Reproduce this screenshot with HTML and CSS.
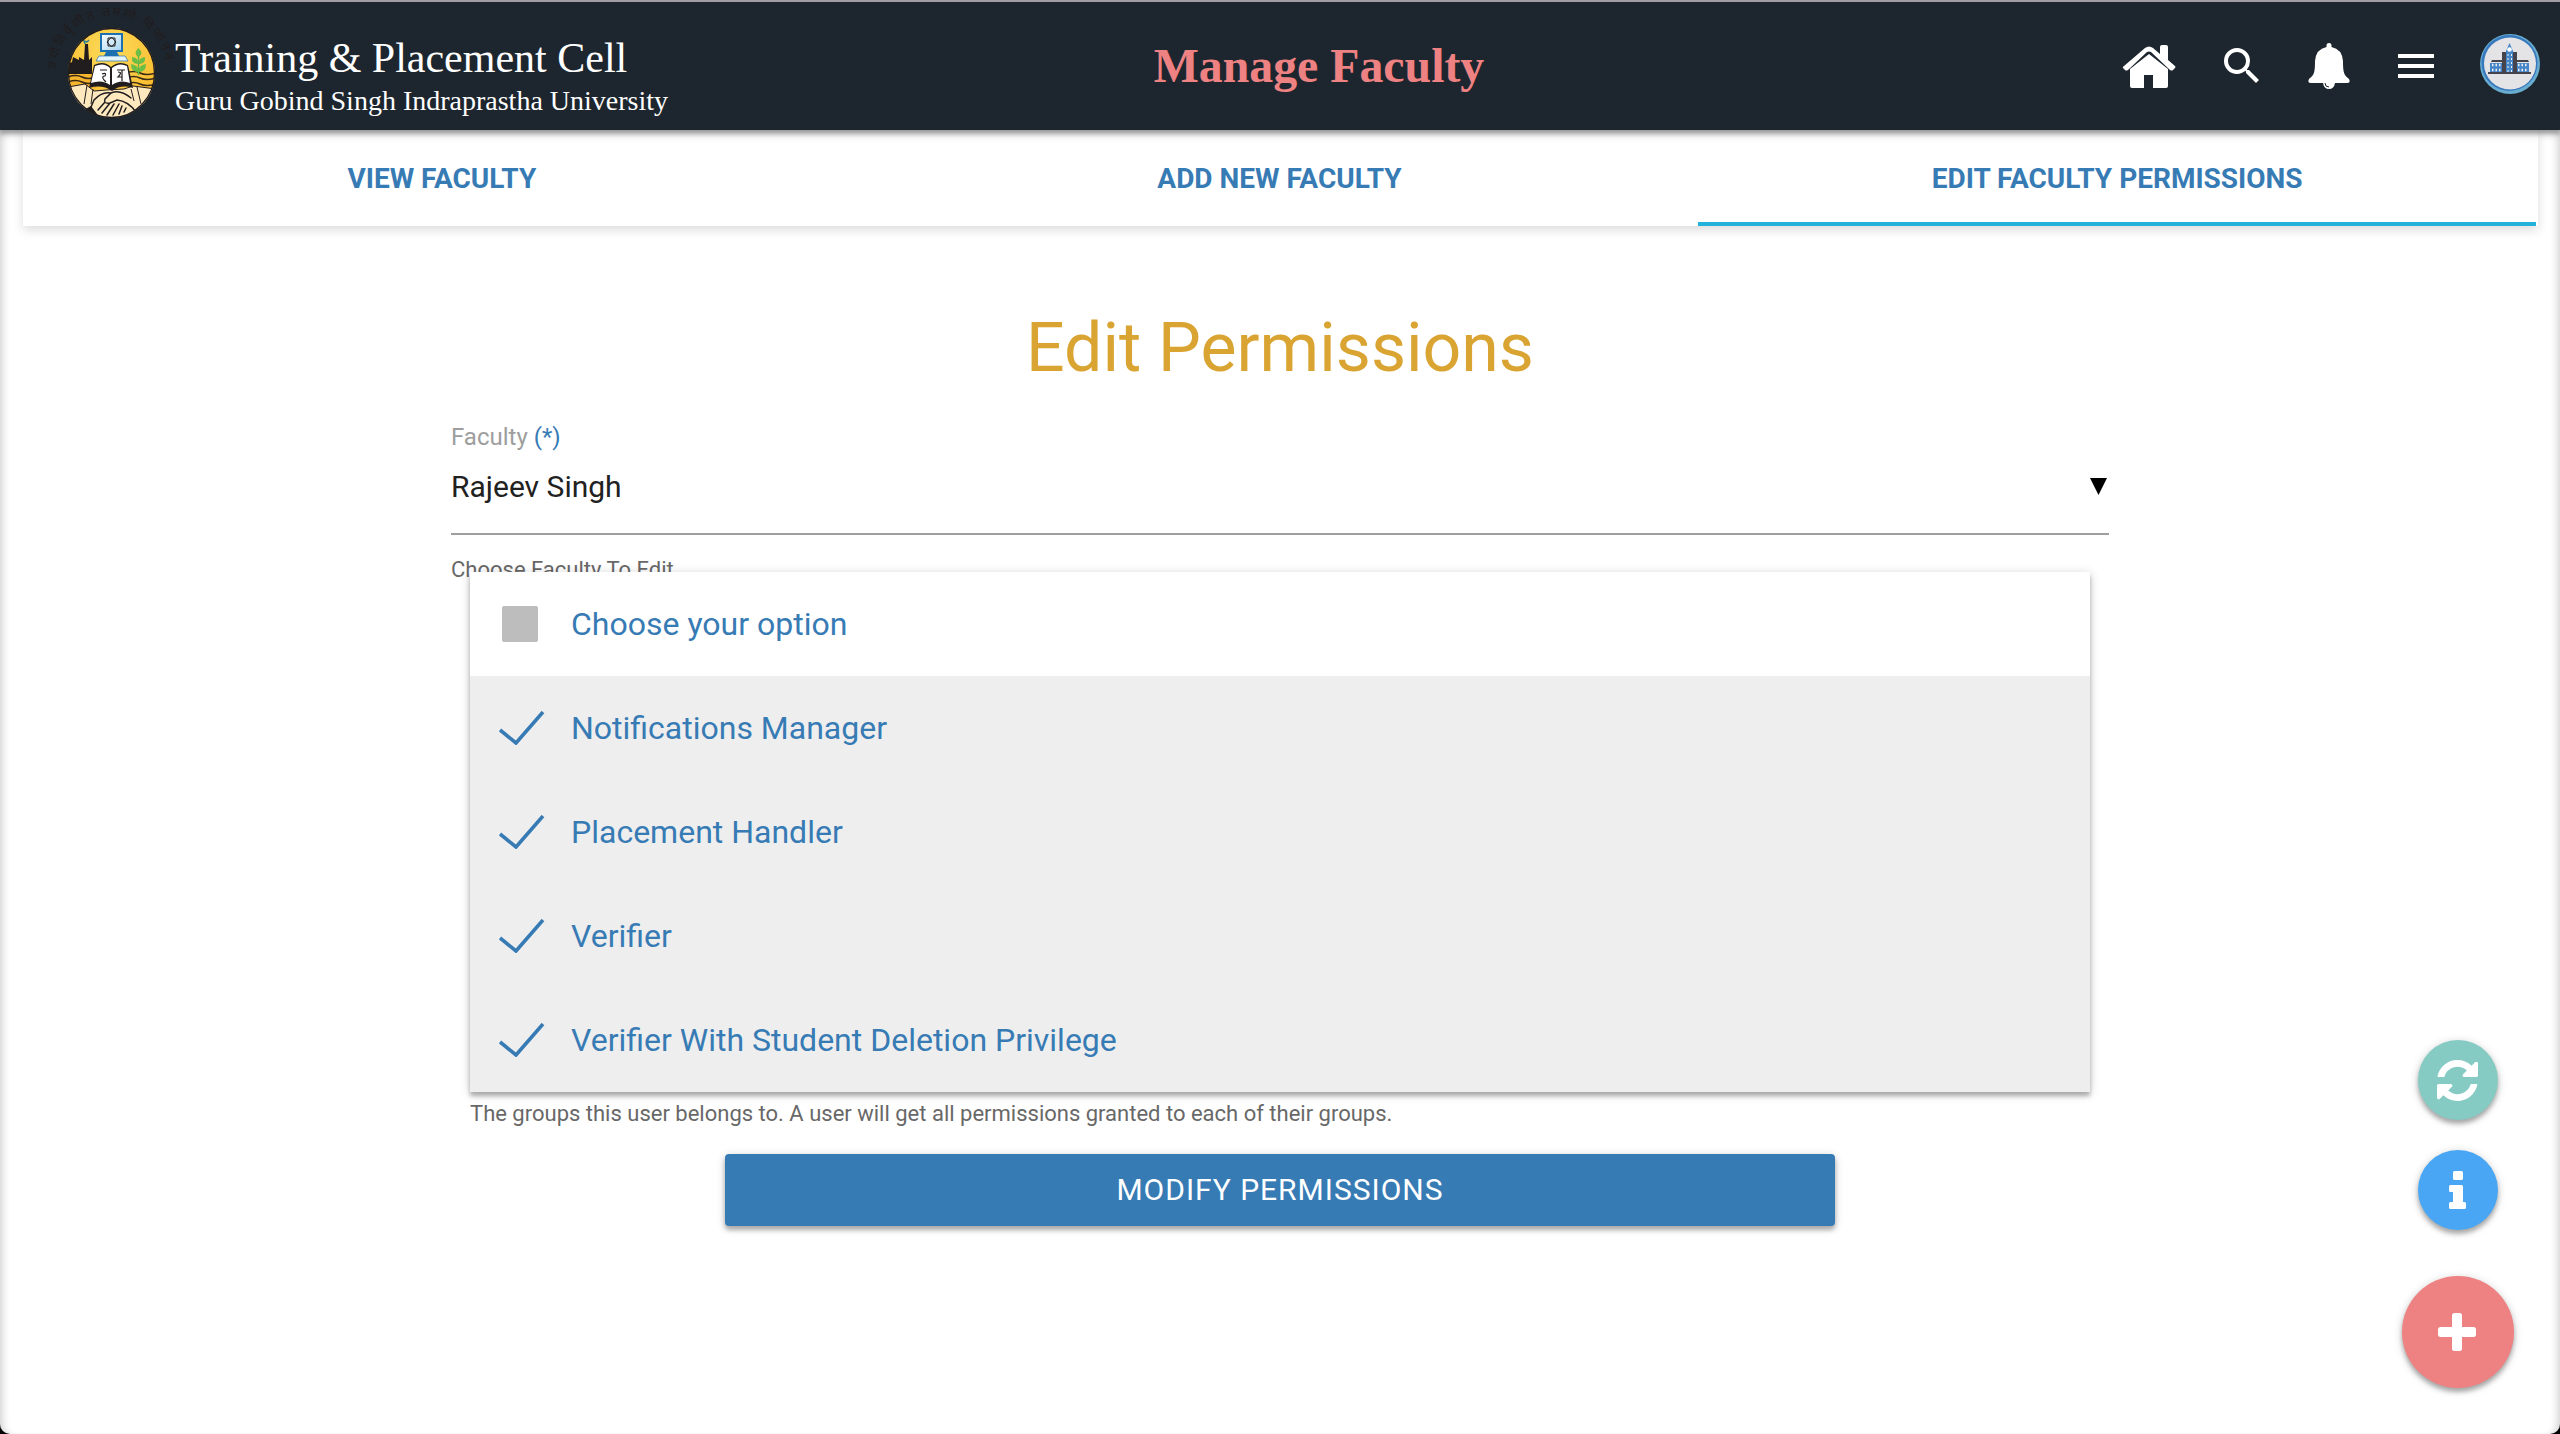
FILE: index.html
```html
<!DOCTYPE html>
<html lang="en">
<head>
<meta charset="utf-8">
<title>Manage Faculty</title>
<link rel="stylesheet" href="styles.css">
</head>
<body>
<header class="navbar">
  <div class="brand">
    <svg class="logo" viewBox="0 0 100 100" width="100" height="100">
      <defs>
        <clipPath id="seal"><ellipse cx="51.500" cy="53" rx="43.500" ry="45"/></clipPath>
        <radialGradient id="sun" cx=".5" cy=".3" r=".7"><stop offset="0" stop-color="#fbdc5c"/><stop offset="1" stop-color="#fbb321"/></radialGradient>
        <linearGradient id="screen" x2="1" y2="1"><stop offset="0" stop-color="#f4fafd"/><stop offset="1" stop-color="#a9d6f1"/></linearGradient>
        <path id="motto" d="M-3 49A54.500 53 0 0 1 106 49"/>
      </defs>
      <text class="motto"><textPath href="#motto" textLength="160">ज्योतिर्वृणीत तमसो विजानन</textPath></text>
      <g clip-path="url(#seal)">
        <rect width="100" height="100" fill="url(#sun)"/>
        <path d="M8 44l4-2 1-5 6 3v-3l5 3 1-16h3l1 16 3-3v28H8z" fill="#211c1e"/>
        <path d="M8 54h28v14H8z" fill="#f7b52c"/>
        <path d="M25 24l-1-3 3 1 2-2" stroke="#2d7e92" stroke-width="1.500" fill="none"/>
        <path d="M8 57q8-3 14 0t14 0M8 62q8-3 14 0t14 0M66 53q8-3 14 0t16 0M66 58q8-3 14 0t16 0M66 64q8-3 14 0t16 0" stroke="#3a2a18" stroke-width="1.500" fill="none"/>
        <path d="M78.500 55V30" stroke="#62b846" stroke-width="1.500"/>
        <path d="M78.500 37q-6-3 0-9 6 6 0 9zM78 44q-7 0-6-7 7 1 6 7zM79 44q7 0 6-7-7 1-6 7zM78 52q-7 0-7-8 8 1 7 8zM79 52q7 0 7-8-8 1-7 8z" fill="#6abd45"/>
        <path d="M8 67l17-3 9 7 12-1 18-1 9-3 23 3-4 31H8z" fill="#fee9bf" stroke="#211c1e"/>
        <path d="M34 45q10-5 17 2 8-7 17-2l5 23q-12-4-21 3-10-7-23-3z" fill="#211c1e"/>
        <path d="M35 46q9-4 15 2v17q-8-6-19-2zM52 48q7-6 15-2l3 17q-10-4-18 2z" fill="#fff"/>
        <path d="M40 50h7M42 54q5-2 3 2-4 0-1 4l2 2M57 50h8M62 50v11M58 52q5 0 0 5h4" stroke="#211c1e" stroke-width="1.200" fill="none"/>
        <path d="M27 65l-3 19M33 69l-2 15M77 67l4 17M71 69l3 12" stroke="#211c1e" stroke-width="1" fill="none"/>
        <path d="M34 80q8-9 17-7l-6 6q-2 5 5 4l7-3q11 1 19 12M51 73q9-4 20 5M38 90l7-8M42 93l8-10M47 95l7-11M53 95l6-11M59 94l3-8M64 92l2-4M34 80l-3 7" stroke="#211c1e" stroke-width="1.500" fill="none" stroke-linecap="round"/>
        <path d="M20 92l11-6 9 12z" fill="#211c1e"/>
      </g>
      <ellipse cx="51.500" cy="53" rx="43" ry="44.500" fill="none" stroke="#211c1e" stroke-width="1.300"/>
      <path d="M40 13h23v19H40z" fill="#1d70b0"/><path d="M42 15h19v15H42z" fill="url(#screen)"/>
      <path d="M46 32h11l2 4H44z" fill="#1d70b0"/><path d="M39 36h26l3 5H36z" fill="#e5f3fb" stroke="#1d70b0" stroke-width=".7"/>
      <path d="M48 18h7v8h-7zM47 22l4.500-5 4.500 5-4.500 5z" fill="none" stroke="#211c1e"/>
    </svg>
    <div class="brand-text">
      <div class="brand-title">Training &amp; Placement Cell</div>
      <div class="brand-sub">Guru Gobind Singh Indraprastha University</div>
    </div>
  </div>
  <h1 class="page-title">Manage Faculty</h1>
  <nav class="nav-icons">
    <svg class="home" viewBox="0 0 54 44" width="54" height="44" fill="#fff"><path d="M2 21L23 3q4-3 8 0l7 6V2q0-2 2-2h4q2 0 2 2v13l7 6q1 1 0 2l-2 2q-1 1-3 0L29 7q-2-1-4 0L6 25q-2 1-3 0l-2-2q-1-1 1-2z"/><path d="M8 24L27 9l19 15v17q0 2-2 2H31V30h-9v13H10q-2 0-2-2z"/></svg>
    <svg class="search" viewBox="3 3 17.500 17.500" width="35" height="35" fill="#fff"><path d="M15.500 14h-.79l-.28-.27A6.471 6.471 0 0 0 16 9.500 6.500 6.500 0 1 0 9.500 16c1.610 0 3.090-.59 4.230-1.570l.27.28v.79l5 4.990L20.490 19l-4.990-5zm-6 0C7.010 14 5 11.990 5 9.500S7.010 5 9.500 5 14 7.010 14 9.500 11.990 14 9.500 14z"/></svg>
    <svg class="bell" viewBox="0 0 44 47" width="44" height="47"><path fill="#fff" d="M22 0q3 0 2.500 4Q35 6 36 18c0 12 1 14 6 18q2 4-2 4H28q-1 6-6 6t-6-6H4q-4 0-2-4c5-4 6-6 6-18Q9 6 19.500 4 19 0 22 0z"/><path d="M18 40q0 4 4 4" fill="none" stroke="#1d262e" stroke-width="1"/></svg>
    <svg class="menu" viewBox="0 0 36 24" width="36" height="24" fill="#fff"><path d="M0 0h36v4H0zM0 10h36v4H0zM0 20h36v4H0z"/></svg>
    <svg class="avatar" viewBox="0 0 60 60" width="60" height="60"><circle cx="30" cy="30" r="30" fill="#68add0"/><circle cx="29.500" cy="29" r="28" fill="#3778bd"/><circle cx="30" cy="29.500" r="26" fill="#e4e4e6"/>
      <path d="M22 18h4v20h-4zM33 18h4v20h-4zM12 26h10v2H11zM37 26h11l1 2H37zM8 38h43v2H8z" fill="#45434b"/>
      <path d="M26 38V17l3.500-8 3.500 8v21zM10 29h12v9H10zM37 29h12v9H37z" fill="#4585c8"/>
      <circle cx="29.500" cy="15.500" r="2.300" fill="#fff"/><path d="M28 20v18M31.500 20v18" stroke="#eee" stroke-width="1" stroke-dasharray="2 2"/><path d="M12 31h9M38 31h10M12 36h9M38 36h10" stroke="#eee" stroke-width="2.500" stroke-dasharray="1.500 2"/></svg>
  </nav>
</header>
<nav class="tabs">
  <a class="tab">VIEW FACULTY</a>
  <a class="tab">ADD NEW FACULTY</a>
  <a class="tab active">EDIT FACULTY PERMISSIONS</a>
</nav>
<main class="content">
  <h2 class="heading">Edit Permissions</h2>
  <form class="form">
    <label class="label">Faculty <span class="required">(*)</span></label>
    <div class="select"><span>Rajeev Singh</span><svg viewBox="0 0 17 17" width="17" height="17"><path d="M0 0h17L8.500 17z"/></svg></div>
    <div class="help">Choose Faculty To Edit</div>
    <ul class="options">
      <li class="option"><span class="box"></span>Choose your option</li>
      <li class="option selected"><svg class="check" viewBox="0 0 46 34"><path d="M1 19l16 13L44 1"/></svg>Notifications Manager</li>
      <li class="option selected"><svg class="check" viewBox="0 0 46 34"><path d="M1 19l16 13L44 1"/></svg>Placement Handler</li>
      <li class="option selected"><svg class="check" viewBox="0 0 46 34"><path d="M1 19l16 13L44 1"/></svg>Verifier</li>
      <li class="option selected"><svg class="check" viewBox="0 0 46 34"><path d="M1 19l16 13L44 1"/></svg>Verifier With Student Deletion Privilege</li>
    </ul>
    <div class="help groups">The groups this user belongs to. A user will get all permissions granted to each of their groups.</div>
    <button class="submit" type="button">MODIFY PERMISSIONS</button>
  </form>
</main>
<div class="fabs">
  <a class="fab refresh"><svg viewBox="0 0 1536 1536" width="41" height="41"><path fill="#fff" d="M1511 928q0 5-1 7-64 268-268 434.500T764 1536q-146 0-282.500-55T238 1324l-129 129q-19 19-45 19t-45-19-19-45V960q0-26 19-45t45-19h448q26 0 45 19t19 45-19 45l-137 137q71 66 161 102t187 36q134 0 250-65t186-179q11-17 53-117 8-23 30-23h192q13 0 22.500 9.500t9.500 22.500zm25-800v448q0 26-19 45t-45 19h-448q-26 0-45-19t-19-45 19-45l138-138Q969 256 768 256q-134 0-250 65T332 500q-11 17-53 117-8 23-30 23H50q-13 0-22.500-9.500T18 608v-7q65-268 270-434.500T768 0q146 0 284 55.500T1297 212l130-129q19-19 45-19t45 19 19 45z"/></svg></a>
  <a class="fab info"><svg viewBox="0 0 17 38" width="17" height="38"><path fill="#fff" d="M5.500 0h7Q14 0 14 1.500v6Q14 9 12.500 9h-7Q4 9 4 7.500v-6Q4 0 5.500 0zM1.500 14h11q1.500 0 1.500 1.500V31h1.500q1.500 0 1.500 1.500v4q0 1.500-1.500 1.500h-14Q0 38 0 36.500v-4Q0 31 1.500 31H4V21H1.500Q0 21 0 19.500v-4Q0 14 1.500 14z"/></svg></a>
  <a class="fab add"><svg viewBox="0 0 38 38" width="38" height="38" fill="#fff"><rect x="14" width="10" height="38" rx="2.500"/><rect y="14" width="38" height="10" rx="2.500"/></svg></a>
</div>
</body>
</html>
```
FILE: styles.css
```css
* { box-sizing: border-box; }
html { background: #000; }
body {
  position: relative;
  margin: 0;
  height: 1434px;
  overflow: hidden;
  background: #fff;
  border-top: 2px solid #a29da2;
  border-radius: 0 0 10px 10px;
  font-family: Roboto, sans-serif;
}
body::after {
  content: "";
  position: absolute;
  inset: 0;
  border-radius: 0 0 10px 10px;
  box-shadow: inset 8px 0 8px -6px rgba(0,0,0,.2), inset -8px 0 8px -6px rgba(0,0,0,.2);
  pointer-events: none;
}
.navbar {
  position: relative;
  z-index: 2;
  display: grid;
  grid-template-columns: minmax(0, 1fr) auto minmax(0, 1fr);
  height: 128px;
  background: #1d262e;
  box-shadow: 0 4px 4px rgba(0,0,0,.24), 0 2px 10px rgba(0,0,0,.3);
  font-family: "Liberation Serif", serif;
  color: #fff;
}
.brand { display: flex; }
.logo { margin: 18px 0 0 60px; flex: none; overflow: visible; }
.motto { font-family: "Noto Sans", sans-serif; font-size: 13px; fill: #211c1e; }
.brand-text { margin: 33px 0 0 15px; white-space: nowrap; }
.brand-title { font-size: 42px; line-height: 46px; }
.brand-sub { font-size: 28px; line-height: 40px; }
.page-title { margin: 36px 0 0 78px; font-size: 47.800px; line-height: 56px; color: #ee8182; }
.nav-icons { display: flex; justify-content: flex-end; padding-right: 20px; }
.home { margin-top: 43px; }
.search { margin: 46px 0 0 48px; }
.bell { margin: 41px 0 0 48px; }
.menu { margin: 52px 0 0 47px; }
.avatar { margin: 32px 0 0 46px; }

.tabs {
  display: grid;
  grid-template-columns: repeat(3, 1fr);
  height: 96px;
  margin: 0 22px 0 23px;
  padding-right: 2px;
  background: #fff;
  box-shadow: 0 4px 10px rgba(0,0,0,.14);
}
.tab {
  padding-top: 33px;
  font-size: 28px;
  line-height: 32px;
  font-weight: 700;
  text-align: center;
  color: #377bb5;
}
.tab.active { border-bottom: 4px solid #22b2dc; }

.heading {
  margin: 82px 0 0;
  text-align: center;
  font-size: 68px;
  line-height: 80px;
  font-weight: 400;
  color: #daa432;
}
.form { width: 1658px; margin: 34px auto 0; }
.label { display: block; font-size: 24px; line-height: 30px; color: #9e9e9e; }
.required { color: #377bb5; }
.select {
  display: flex;
  justify-content: space-between;
  height: 84px;
  margin-top: -1px;
  padding: 16px 2px 0 0;
  border-bottom: 2px solid #9e9e9e;
  font-size: 30px;
  line-height: 40px;
  color: #212121;
}
.select svg { margin-top: 11px; fill: #000; }
.help { margin-top: 21px; font-size: 22px; line-height: 28px; color: #686868; white-space: nowrap; }
.options {
  position: relative;
  margin: -12px 19px 0;
  padding: 0;
  list-style: none;
  background: #fff;
  box-shadow: 0 4px 4px rgba(0,0,0,.24), 0 2px 10px rgba(0,0,0,.2);
}
.option {
  display: flex;
  align-items: center;
  height: 104px;
  padding-left: 28px;
  font-size: 32px;
  color: #377bb5;
}
.selected { background: #eee; }
.box { width: 36px; height: 36px; margin: 0 33px 0 4px; border-radius: 2px; background: #bdbdbd; }
.check { width: 46px; height: 34px; margin: 0 26px 0 1px; fill: none; stroke: #377bb5; stroke-width: 3.600; }
.groups { margin: 8px 0 0 19px; }
.submit {
  display: block;
  width: 1110px;
  height: 72px;
  margin: 26px auto 0;
  padding: 0;
  border: 0;
  border-radius: 4px;
  background: #377bb5;
  box-shadow: 0 4px 4px rgba(0,0,0,.24), 0 2px 10px rgba(0,0,0,.2);
  color: #fff;
  font: 400 30px/70px Roboto, sans-serif;
  letter-spacing: 1px;
}
.fabs {
  position: absolute;
  right: 46px;
  bottom: 46px;
  display: flex;
  flex-direction: column;
  align-items: center;
}
.fab {
  display: flex;
  align-items: center;
  justify-content: center;
  width: 80px;
  height: 80px;
  border-radius: 50%;
  box-shadow: 0 4px 4px rgba(0,0,0,.24), 0 2px 10px rgba(0,0,0,.2);
}
.refresh { background: #85cbc4; }
.info { margin-top: 30px; background: #48a6f4; }
.add { width: 112px; height: 112px; margin-top: 46px; background: #ee8182; }
.fab svg { margin-right: 2px; }
```
